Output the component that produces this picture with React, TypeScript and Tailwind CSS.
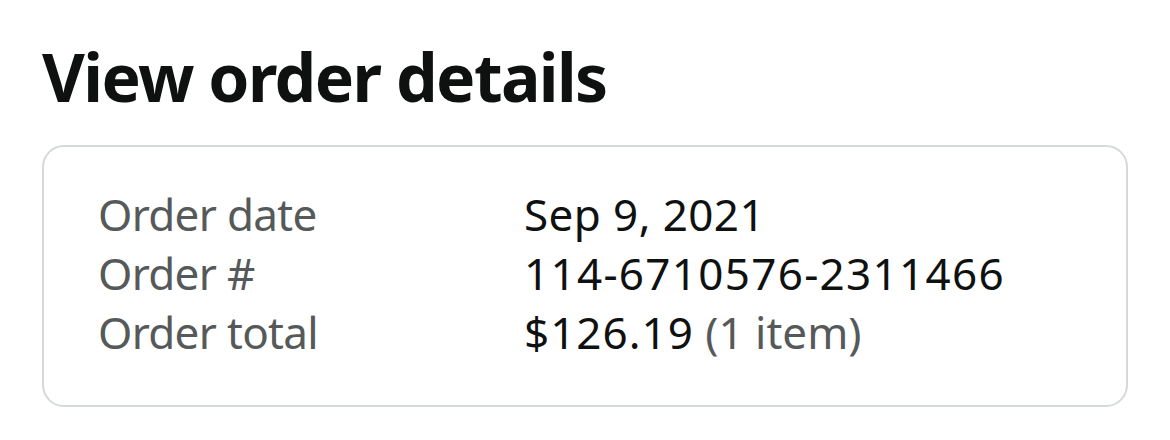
export default function App() {
  const rows: [string, React.ReactNode][] = [
    ["Order date", <span className="tracking-[0.4px]">Sep 9, 2021</span>],
    ["Order #", <span className="tracking-[1.3px]">114-6710576-2311466</span>],
    [
      "Order total",
      <>
        <span className="tracking-[1px]">$126.19</span>{" "}
        <span className="text-[#565959]">(1 item)</span>
      </>,
    ],
  ];
  return (
    <div
      className="w-[1170px] h-[440px] bg-white px-[42px] pt-[36px]"
      style={{ fontFamily: '"Noto Sans", sans-serif' }}
    >
      <h1 className="text-[66px] font-bold leading-[80px] tracking-[-1.6px] text-[#0f1111]">View order details</h1>
      <div className="mt-[29px] w-[1086px] h-[262px] rounded-[22px] border-2 border-[#d5d9d9] pl-[54px] pt-[38px]">
        {rows.map(([k, v], i) => (
          <div key={i} className="flex text-[44px] leading-[59px]">
            <div className="w-[426px] text-[#565959] tracking-[-0.7px]">{k}</div>
            <div className="text-[#0f1111]">{v}</div>
          </div>
        ))}
      </div>
    </div>
  );
}
